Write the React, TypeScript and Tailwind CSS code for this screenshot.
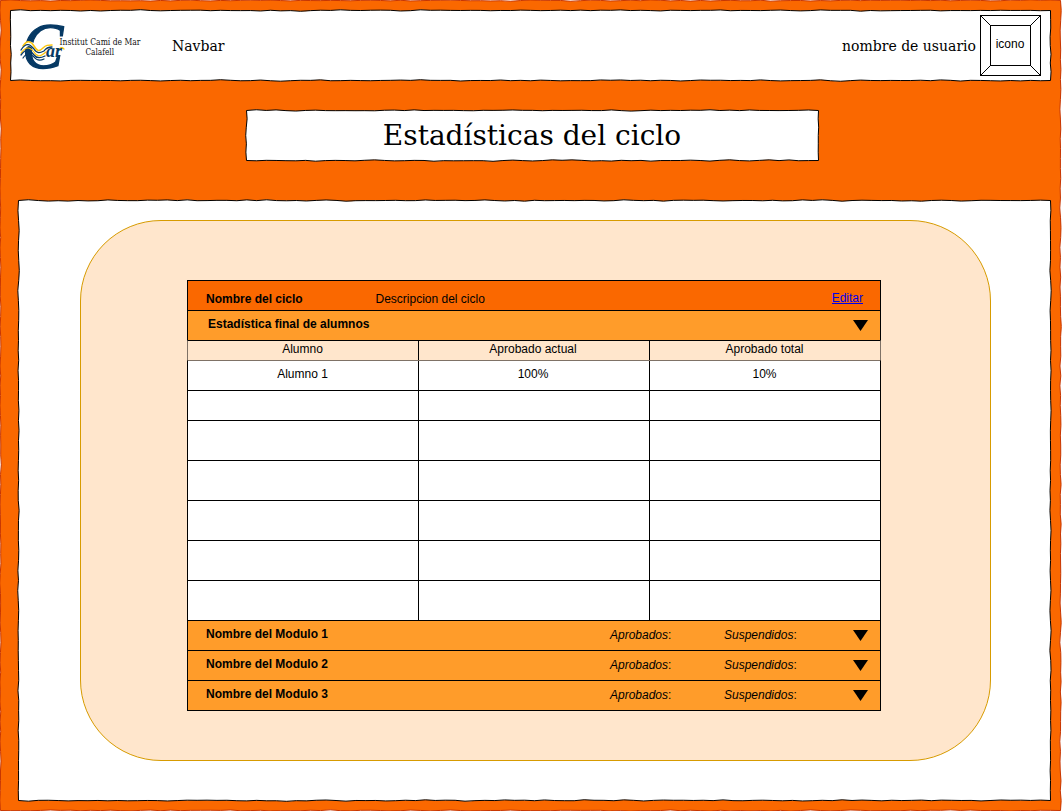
import type { ReactNode } from 'react';

function jiggleLine(x1: number, y1: number, x2: number, y2: number, next: () => number) {
  const length = Math.hypot(x2 - x1, y2 - y1);
  const steps = Math.max(2, Math.round(length / 20));
  const nx = -(y2 - y1) / length;
  const ny = (x2 - x1) / length;
  let d = '';
  for (let i = 1; i <= steps; i++) {
    const mid = (i - 0.5) / steps;
    const end = i / steps;
    const bend = (next() - 0.5) * 3;
    const shift = i === steps ? 0 : (next() - 0.5) * 0.5;
    const px = x1 + (x2 - x1) * mid + nx * bend;
    const py = y1 + (y2 - y1) * mid + ny * bend;
    const ex = x1 + (x2 - x1) * end + nx * shift;
    const ey = y1 + (y2 - y1) * end + ny * shift;
    d += `Q${px.toFixed(2)} ${py.toFixed(2)} ${ex.toFixed(2)} ${ey.toFixed(2)}`;
  }
  return d;
}

function sketchPath(w: number, h: number, seed: number) {
  let state = seed;
  const next = () => {
    state = (state * 16807) % 2147483647;
    return state / 2147483647;
  };
  const r = w - 0.5;
  const b = h - 0.5;
  return (
    'M0.5 0.5' +
    jiggleLine(0.5, 0.5, r, 0.5, next) +
    jiggleLine(r, 0.5, r, b, next) +
    jiggleLine(r, b, 0.5, b, next) +
    jiggleLine(0.5, b, 0.5, 0.5, next) +
    'Z'
  );
}

type SketchBoxProps = {
  width: number;
  height: number;
  seed: number;
  fill?: string;
  stroke?: string;
  className: string;
  children: ReactNode;
};

function SketchBox({ width, height, seed, fill = '#ffffff', stroke = '#000000', className, children }: SketchBoxProps) {
  return (
    <div className={`relative isolate shrink-0 ${className}`}>
      <svg className="absolute inset-0 -z-10 overflow-visible" width={width} height={height}>
        <path d={sketchPath(width, height, seed)} fill={fill} stroke={stroke} strokeWidth="1" />
      </svg>
      {children}
    </div>
  );
}

function Logo() {
  return (
    <svg width="130" height="56" viewBox="15 18 130 56" className="shrink-0 overflow-visible">
      <text
        transform="translate(22 68) scale(0.95 1)"
        fontFamily="Liberation Serif, serif"
        fontStyle="italic"
        fontSize="65"
        fill="#063964"
        stroke="#063964"
        strokeWidth="1.3"
      >
        C
      </text>
      <g fill="none" strokeLinecap="round">
        <path d="M22 50C26 42 31 42 35 48C38 54 42 56 48 50" stroke="#ffffff" strokeWidth="4.5" />
        <path d="M23 46C27 40 31 41 34 46C37 51 39 52 43 48C46 45 48 45 52 45" stroke="#fdc60b" strokeWidth="1.5" />
        <path d="M21 50C26 42 30 44 34 49C37 54 40 53 44 51C46 48 49 47 52 47" stroke="#063964" strokeWidth="1.3" />
        <path d="M21 53C26 46 30 47 34 52C37 57 40 57 46 52" stroke="#fdc60b" strokeWidth="1.2" />
        <path d="M21 55C26 48 30 50 34 55C37 59 41 58 45 56" stroke="#063964" strokeWidth="1.3" />
        <path d="M23 58C27 52 30 53 34 57C37 61 40 61 44 59" stroke="#063964" strokeWidth="1.2" />
        <path d="M57 49C60 51 60 45 64 49" stroke="#fdc60b" strokeWidth="1.2" />
      </g>
      <text
        x="46"
        y="57"
        textLength="16"
        lengthAdjust="spacingAndGlyphs"
        fontFamily="Liberation Serif, serif"
        fontStyle="italic"
        fontWeight="700"
        fontSize="18"
        fill="#063964"
      >
        ar
      </text>
      <g fontFamily="DejaVu Serif Condensed, DejaVu Serif, serif" fontSize="8.8" fill="#111111">
        <text x="59.5" y="44.5" textLength="81" lengthAdjust="spacingAndGlyphs">Institut Camí de Mar</text>
        <text x="85.5" y="55.3" textLength="28.5" lengthAdjust="spacingAndGlyphs">Calafell</text>
      </g>
    </svg>
  );
}

function UserIcon() {
  return (
    <div className="relative flex size-[61px] items-center justify-center border border-black">
      <svg className="absolute -inset-px" width="61" height="61" fill="none" stroke="#000" shapeRendering="crispEdges">
        <rect x="10.5" y="10.5" width="40" height="40" />
        <path d="M0.5 0.5L10.5 10.5M60.5 0.5L50.5 10.5M0.5 60.5L10.5 50.5M60.5 60.5L50.5 50.5" />
      </svg>
      <span className="mb-[3px] pr-px text-xs">icono</span>
    </div>
  );
}

function Arrow() {
  return (
    <svg width="15" height="11" viewBox="0 0 15 11" className="mt-[9px] shrink-0">
      <path d="M0 0H15L7.5 11Z" fill="#000" />
    </svg>
  );
}

const rows = [
  { height: 'h-[30px]', cells: ['Alumno 1', '100%', '10%'] },
  { height: 'h-[30px]', cells: ['', '', ''] },
  { height: 'h-10', cells: ['', '', ''] },
  { height: 'h-10', cells: ['', '', ''] },
  { height: 'h-10', cells: ['', '', ''] },
  { height: 'h-10', cells: ['', '', ''] },
  { height: 'h-10', cells: ['', '', ''] },
];

const modules = ['Nombre del Modulo 1', 'Nombre del Modulo 2', 'Nombre del Modulo 3'];

function CycleTable() {
  return (
    <section className="flex w-[694px] flex-col text-xs leading-4 text-black">
      <div className="flex h-[30px] border-x border-t border-black bg-[#fa6800] pt-2.5 pr-[17px] pl-[18px]">
        <h2 className="w-[169.5px] font-bold">Nombre del ciclo</h2>
        <p>Descripcion del ciclo</p>
        <a href="#" className="-mt-px ml-auto h-[14px] border-b border-[#0000ee] text-[#0000ee]">Editar</a>
      </div>
      <div className="flex h-[30px] justify-between border-x border-t border-black bg-[#ff9c2a] pr-3 pl-5">
        <h3 className="mt-[5px] font-bold">Estadística final de alumnos</h3>
        <Arrow />
      </div>
      <div className="grid h-5 grid-cols-[230px_231px_231px] border-x border-t border-x-[#7f7266] border-t-black bg-[#ffe6cc] text-center">
        <span className="pr-px">Alumno</span>
        <span className="border-l border-black pr-0.5">Aprobado actual</span>
        <span className="border-l border-black pr-px">Aprobado total</span>
      </div>
      {rows.map((row, i) => (
        <div
          key={i}
          className={`grid grid-cols-[230px_231px_231px] border-x border-t border-x-black bg-white text-center ${row.height} ${i === 0 ? 'border-t-[#7f7266]' : 'border-t-black'}`}
        >
          <span className="pt-[5px] pr-px">{row.cells[0]}</span>
          <span className="border-l border-black pt-[5px] pr-0.5">{row.cells[1]}</span>
          <span className="border-l border-black pt-[5px] pr-px">{row.cells[2]}</span>
        </div>
      ))}
      {modules.map((name) => (
        <div key={name} className="flex h-[30px] border-x border-t border-black bg-[#ff9c2a] pr-3 pl-[18px] last:h-[31px] last:border-b">
          <h3 className="mt-[5px] w-[404px] font-bold">{name}</h3>
          <p className="mt-1.5 w-[114px]"><i>Aprobados</i>:</p>
          <p className="mt-1.5"><i>Suspendidos</i>:</p>
          <div className="ml-auto"><Arrow /></div>
        </div>
      ))}
    </section>
  );
}

export default function App() {
  return (
    <div className="h-[811px] w-[1062px] overflow-hidden bg-white font-['Liberation_Sans',sans-serif] text-black">
      <SketchBox width={1061} height={811} seed={4711} fill="#fa6800" stroke="#c73500" className="flex h-[811px] w-[1061px] flex-col pt-2.5">
        <SketchBox width={1041} height={71} seed={911} className="ml-2.5 flex h-[71px] w-[1041px] items-center pr-2.5 pl-[5px]">
          <Logo />
          <span className="mt-px ml-[27px] font-['DejaVu_Serif',serif] text-sm">Navbar</span>
          <span className="mt-px mr-1 ml-auto font-['DejaVu_Serif',serif] text-sm">nombre de usuario</span>
          <UserIcon />
        </SketchBox>
        <SketchBox width={573} height={51} seed={2025} className="mt-[29px] ml-[246px] flex h-[51px] w-[573px] items-center justify-center pr-px">
          <h1 className="font-['DejaVu_Serif',serif] text-[28px] leading-8">Estadísticas del ciclo</h1>
        </SketchBox>
        <SketchBox width={1033} height={601} seed={377} className="mt-[39px] ml-[18px] h-[601px] w-[1033px] pt-5 pl-[62px]">
          <main className="h-[541px] w-[911px] rounded-[81px] border border-[#d79b00] bg-[#ffe6cc] pt-[59px] pl-[106px]">
            <CycleTable />
          </main>
        </SketchBox>
      </SketchBox>
    </div>
  );
}
